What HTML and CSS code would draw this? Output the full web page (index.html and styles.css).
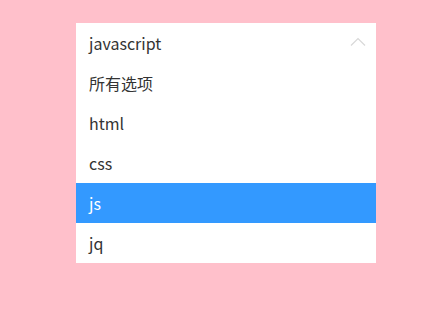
FILE: index.html
```html
<!DOCTYPE html>
<html>
<head>
<meta charset="utf-8">
<link rel="stylesheet" href="styles.css">
</head>
<body>
<div class="select">
  <div class="head"><span>javascript</span>
    <svg class="chev" width="16" height="10" viewBox="0 0 16 10"><path d="M1 8.5 L8 1.5 L15 8.5" fill="none" stroke="#d8d8d8" stroke-width="1.2"/></svg>
  </div>
  <ul class="list">
    <li>所有选项</li>
    <li>html</li>
    <li>css</li>
    <li class="active">js</li>
    <li>jq</li>
  </ul>
</div>
</body>
</html>
```
FILE: styles.css
```css
html, body { margin: 0; padding: 0; }
body {
  background: #ffc0cb;
  width: 423px;
  height: 314px;
  font-family: "Noto Sans CJK SC", "Open Sans", sans-serif;
  padding: 23px 0 0 76px;
  box-sizing: border-box;
}
.select { width: 300px; background: #fff; }
.head {
  height: 40px;
  display: flex;
  align-items: center;
  justify-content: space-between;
  padding: 0 10px 0 13px;
  font-size: 16px;
  color: #333;
}
.chev { margin-top: -2px; }
.list { list-style: none; margin: 0; padding: 0; }
.list li {
  height: 40px;
  line-height: 40px;
  padding-left: 13px;
  font-size: 16px;
  color: #333;
}
.list li.active { background: #3399ff; color: #fff; }
```
